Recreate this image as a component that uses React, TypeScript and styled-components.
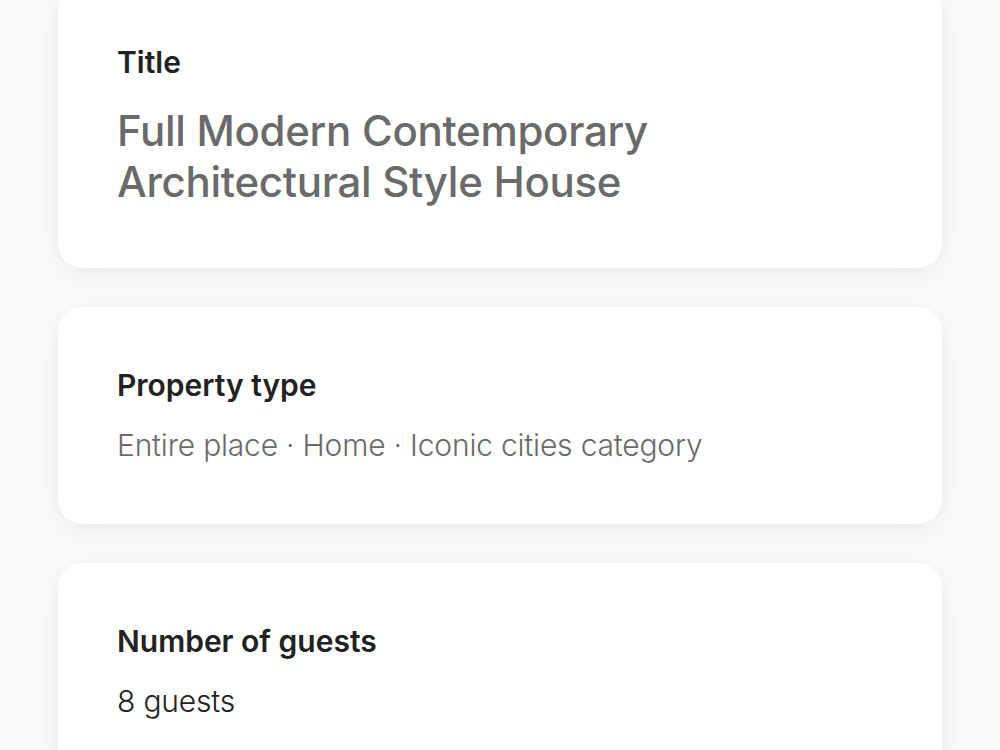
import styled, { createGlobalStyle } from "styled-components";

const GlobalStyle = createGlobalStyle`
  html, body {
    margin: 0;
    padding: 0;
    background-color: #fafafa;
    font-family: Inter, "Noto Sans", "Liberation Sans", sans-serif;
    -webkit-font-smoothing: antialiased;
  }
`;

/** 詳細カードの一覧（上に少しスクロールした状態） */
const List = styled.div`
  display: flex;
  flex-direction: column;
  gap: 39px;
  padding: 0 58px;
  margin-top: -16px;
`;

const Card = styled.section`
  background-color: #ffffff;
  border-radius: 24px;
  box-shadow: 0 6px 28px rgba(0, 0, 0, 0.06), 0 1px 4px rgba(0, 0, 0, 0.02);
  padding: 60px 59px 59px;
  display: flex;
  flex-direction: column;
  gap: 22px;
`;

const Label = styled.h3`
  margin: 0;
  font-size: 30px;
  line-height: 36px;
  font-weight: 600;
  color: #222222;
`;

const Value = styled.p<{ $large?: boolean; $dark?: boolean }>`
  margin: ${(p) => (p.$large ? "3px 0 2px" : "0")};
  font-size: ${(p) => (p.$large ? "42px" : "30px")};
  line-height: ${(p) => (p.$large ? "51px" : "40px")};
  font-weight: ${(p) => (p.$large ? 500 : 300)};
  color: ${(p) => (p.$dark ? "#222222" : "#6a6a6a")};
  letter-spacing: ${(p) => (p.$large ? "-0.3px" : "-0.2px")};
`;

export default function App() {
  return (
    <>
      <GlobalStyle />
      <List>
        <Card>
          <Label>Title</Label>
          <Value $large>
            Full Modern Contemporary
            <br />
            Architectural Style House
          </Value>
        </Card>
        <Card>
          <Label>Property type</Label>
          <Value>Entire place · Home · Iconic cities category</Value>
        </Card>
        <Card>
          <Label>Number of guests</Label>
          <Value $dark>8 guests</Value>
        </Card>
      </List>
    </>
  );
}
